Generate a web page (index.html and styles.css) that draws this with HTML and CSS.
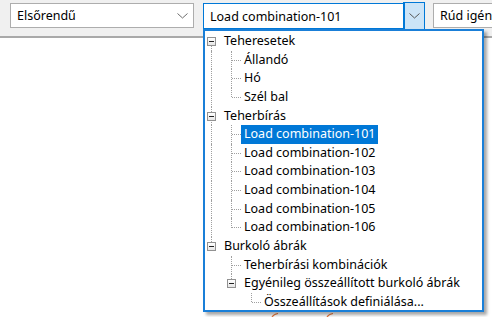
FILE: index.html
```html
<!DOCTYPE html>
<html lang="hu">

<head>
  <meta charset="UTF-8">
  <meta name="viewport" content="width=device-width, initial-scale=1.0">
  <title>Teherkombinációk</title>
  <link rel="stylesheet" href="styles.css">
</head>

<body>
  <header class="toolbar">
    <div class="combo combo--order">
      <span class="combo__text">Elsőrendű</span>
      <span class="combo__arrow">
        <svg width="11" height="6" viewBox="0 0 11 6"><path d="M0.5 0.5 L5.5 5 L10.5 0.5" fill="none" stroke="#6d6d6d" stroke-width="1"/></svg>
      </span>
    </div>
    <div class="combo combo--load combo--open">
      <span class="combo__text">Load combination-101</span>
      <span class="combo__btn">
        <svg width="11" height="6" viewBox="0 0 11 6"><path d="M0.5 0.5 L5.5 5 L10.5 0.5" fill="none" stroke="#555" stroke-width="1"/></svg>
      </span>
    </div>
    <div class="combo combo--bar">
      <span class="combo__text">Rúd igények</span>
    </div>
  </header>

  <main class="canvas">
    <svg class="canvas__drawing" width="492" height="6" viewBox="0 0 492 6">
      <path d="M272 6 Q274 3 278 2.5" fill="none" stroke="#e8763a" stroke-width="1.2"/>
      <path d="M327 6 Q329 3 333 2.5" fill="none" stroke="#e8763a" stroke-width="1.2"/>
    </svg>
  </main>

  <div class="dropdown">
    <div class="tree">
      <div class="node">
        <span class="guide guide--exp guide--down"><span class="expander"></span></span>
        <span class="node__label">Teheresetek</span>
      </div>
      <div class="node">
        <span class="guide guide--v"></span><span class="guide guide--t"></span>
        <span class="node__label">Állandó</span>
      </div>
      <div class="node">
        <span class="guide guide--v"></span><span class="guide guide--t"></span>
        <span class="node__label">Hó</span>
      </div>
      <div class="node">
        <span class="guide guide--v"></span><span class="guide guide--l"></span>
        <span class="node__label">Szél bal</span>
      </div>
      <div class="node">
        <span class="guide guide--exp guide--up guide--down"><span class="expander"></span></span>
        <span class="node__label">Teherbírás</span>
      </div>
      <div class="node">
        <span class="guide guide--v"></span><span class="guide guide--t"></span>
        <span class="node__label node__label--selected">Load combination-101</span>
      </div>
      <div class="node">
        <span class="guide guide--v"></span><span class="guide guide--t"></span>
        <span class="node__label">Load combination-102</span>
      </div>
      <div class="node">
        <span class="guide guide--v"></span><span class="guide guide--t"></span>
        <span class="node__label">Load combination-103</span>
      </div>
      <div class="node">
        <span class="guide guide--v"></span><span class="guide guide--t"></span>
        <span class="node__label">Load combination-104</span>
      </div>
      <div class="node">
        <span class="guide guide--v"></span><span class="guide guide--t"></span>
        <span class="node__label">Load combination-105</span>
      </div>
      <div class="node">
        <span class="guide guide--v"></span><span class="guide guide--l"></span>
        <span class="node__label">Load combination-106</span>
      </div>
      <div class="node">
        <span class="guide guide--exp guide--up"><span class="expander"></span></span>
        <span class="node__label">Burkoló ábrák</span>
      </div>
      <div class="node">
        <span class="guide"></span><span class="guide guide--t"></span>
        <span class="node__label">Teherbírási kombinációk</span>
      </div>
      <div class="node">
        <span class="guide"></span>
        <span class="guide guide--exp guide--up"><span class="expander"></span></span>
        <span class="node__label">Egyénileg összeállított burkoló ábrák</span>
      </div>
      <div class="node">
        <span class="guide"></span><span class="guide"></span><span class="guide guide--l"></span>
        <span class="node__label">Összeállítások definiálása...</span>
      </div>
    </div>
  </div>
</body>

</html>
```

FILE: styles.css
```css
html {
  font-size: 12.5px;
}

body {
  background-color: #fff;
  height: 317px;
  margin: 0;
  overflow: hidden;
  position: relative;
  width: 492px;
}

* {
  box-sizing: border-box;
  font-family: "Noto Sans", "Open Sans", sans-serif;
}

/* toolbar with the three combos */

.toolbar {
  background-color: #f0f0f0;
  border-bottom: 2px solid #a9a9a9;
  display: flex;
  gap: 9px;
  height: 38px;
  padding: 3px 0 0 10px;
}

.combo {
  align-items: center;
  background-color: #fff;
  border: 1px solid #adadad;
  color: #000;
  display: flex;
  flex: none;
  height: 25px;
  justify-content: space-between;
  padding-left: 6px;
}

.combo--order {
  width: 184px;
}

.combo--load {
  border-color: #0078d7;
  height: 26px;
  width: 221px;
}

.combo--bar {
  width: 80px;
}

.combo__text {
  font-size: 12.5px;
  white-space: nowrap;
}

.combo__arrow {
  display: flex;
  padding-right: 5px;
}

.combo__btn {
  align-items: center;
  align-self: stretch;
  background-color: #cce4f7;
  border-left: 1px solid #0078d7;
  display: flex;
  justify-content: center;
  margin: -1px -1px -1px 0;
  outline: 1px solid #0078d7;
  width: 20px;
}

.canvas {
  height: 279px;
  position: relative;
}

.canvas__drawing {
  bottom: 0;
  left: 0;
  position: absolute;
}

/* open dropdown list */

.dropdown {
  background-color: #fff;
  border: 2px solid #1a7fd8;
  box-shadow: 3px 3px 3px rgba(0, 0, 0, .35);
  height: 283px;
  left: 203px;
  padding: 1px 0 0 0;
  position: absolute;
  top: 29px;
  width: 281px;
}

.tree {
  margin-left: -4px;
}

.node {
  align-items: stretch;
  display: flex;
  height: 18.64px;
}

.guide {
  flex: none;
  position: relative;
  width: 20px;
}

.guide--v::before,
.guide--t::before,
.guide--l::before,
.guide--up::before,
.guide--down::after {
  border-left: 1px dotted #a0a0a0;
  content: "";
  left: 10px;
  position: absolute;
}

.guide--v::before,
.guide--t::before {
  bottom: 0;
  top: 0;
}

.guide--l::before,
.guide--up::before {
  height: 50%;
  top: 0;
}

.guide--down::after {
  bottom: 0;
  height: 50%;
}

.guide--t::after,
.guide--l::after {
  border-top: 1px dotted #a0a0a0;
  content: "";
  left: 11px;
  position: absolute;
  right: 0;
  top: 9px;
}

.guide--exp {
  align-items: center;
  display: flex;
}

.expander {
  background: linear-gradient(#fff, #e6e6e6);
  border: 1px solid #919191;
  height: 9px;
  left: 6px;
  position: absolute;
  top: 5px;
  width: 9px;
  z-index: 1;
}

.expander::after {
  background-color: #222;
  content: "";
  height: 1px;
  left: 1px;
  position: absolute;
  top: 3px;
  width: 5px;
}

.node__label {
  color: #000;
  font-size: 12.5px;
  line-height: 18px;
  padding: 0 3px;
  white-space: nowrap;
}

.node__label--selected {
  background-color: #0078d7;
  color: #fff;
}
```
